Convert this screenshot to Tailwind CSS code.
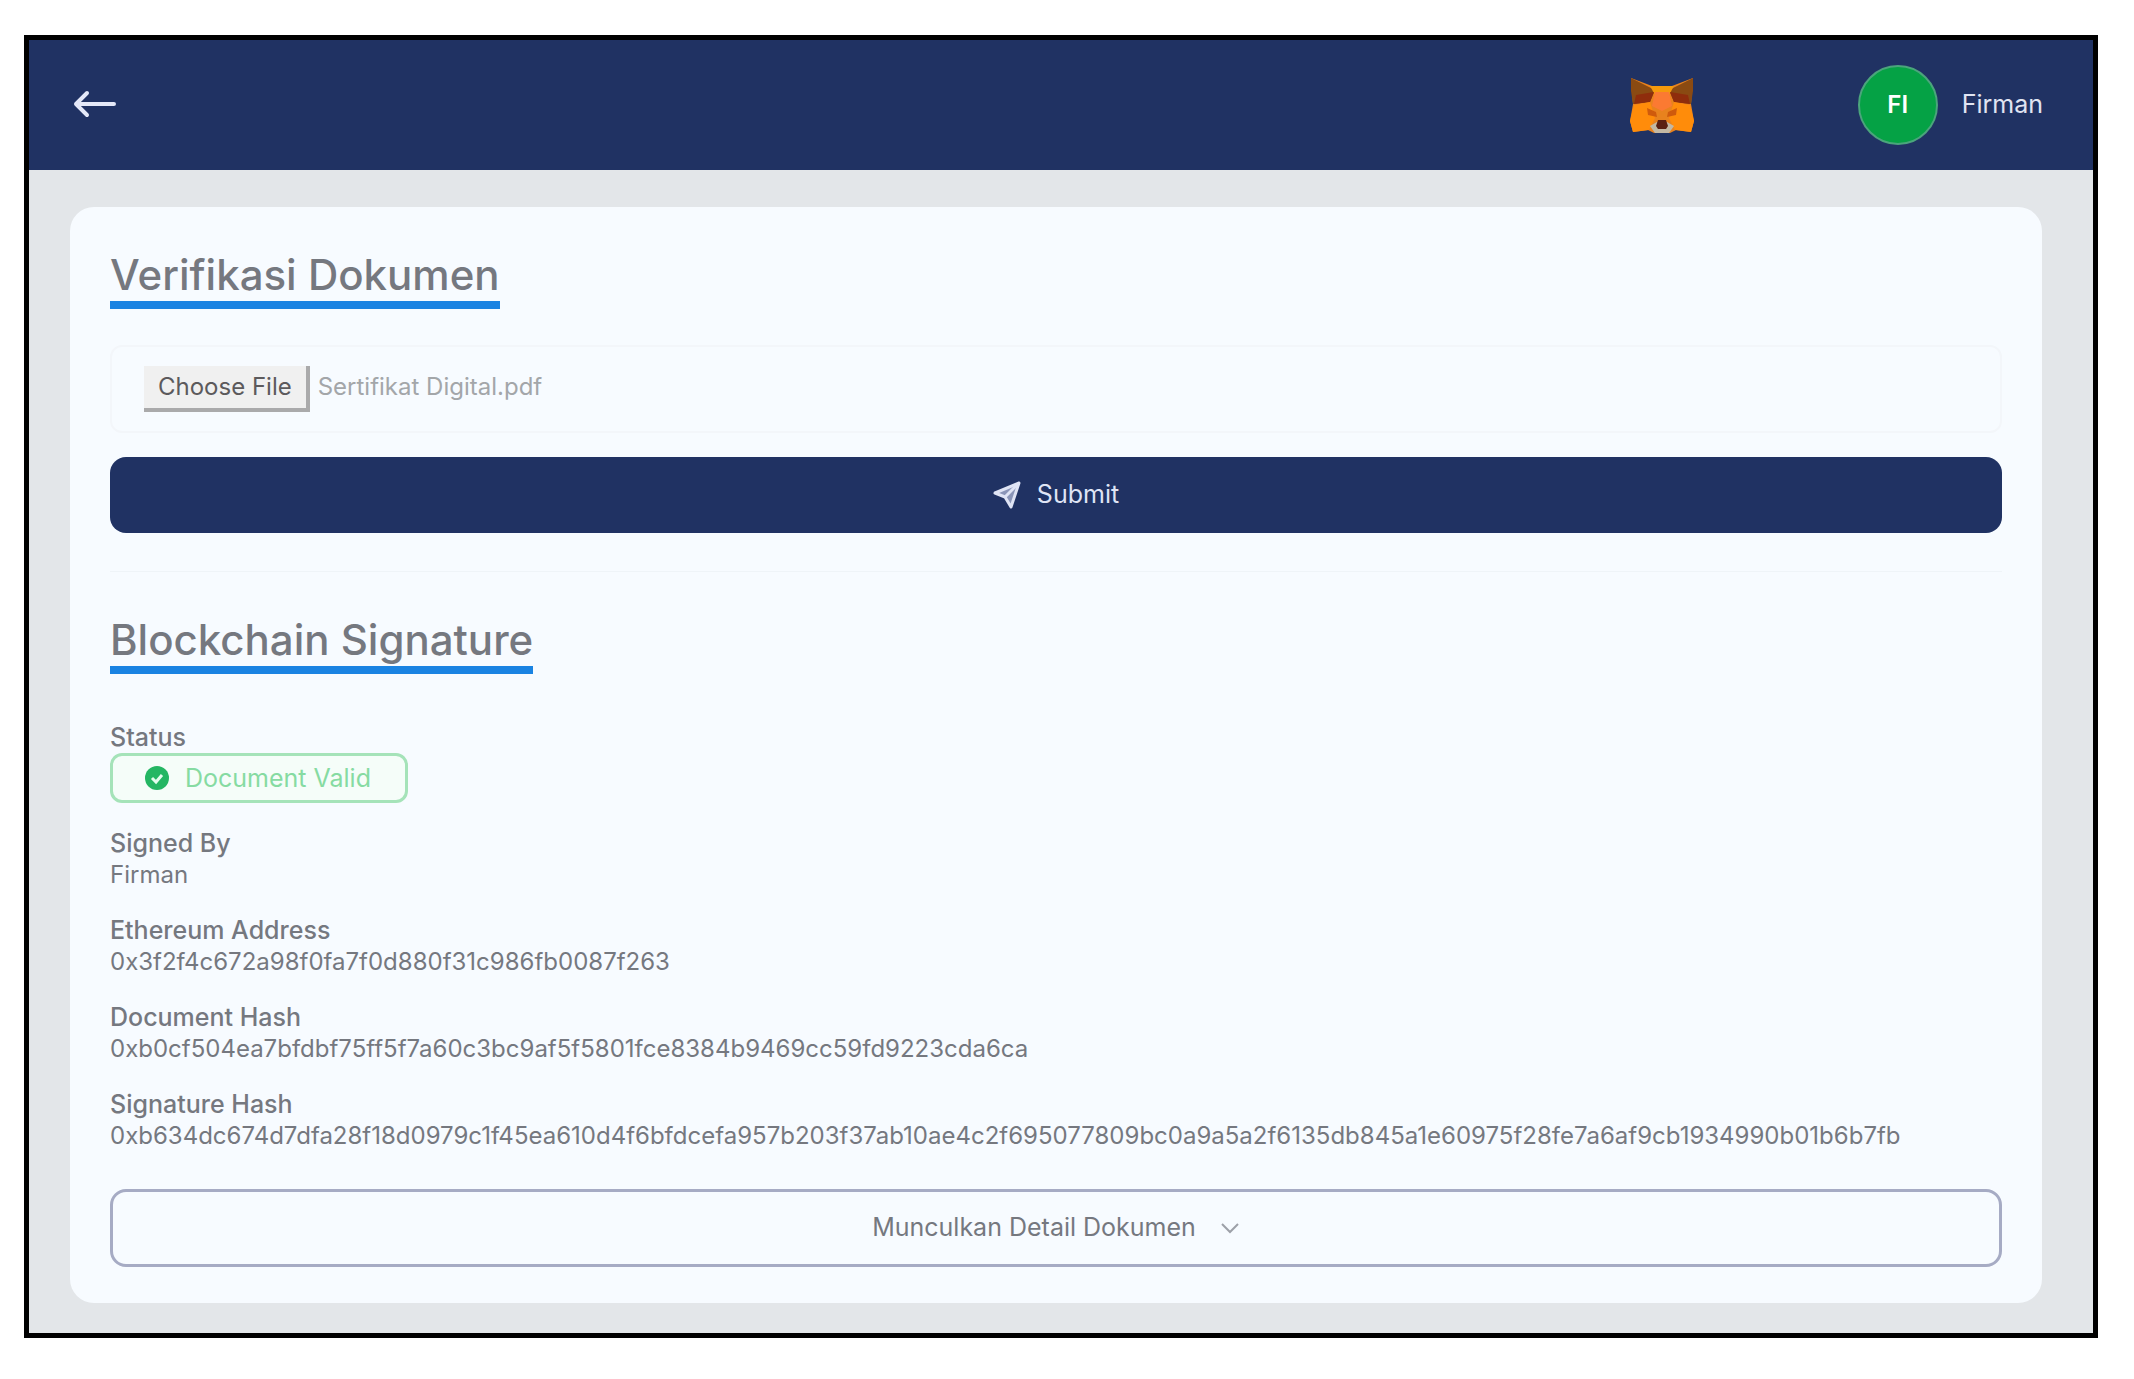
<!DOCTYPE html>
<html lang="id">
  <head>
    <meta charset="UTF-8" />
    <meta name="viewport" content="width=device-width, initial-scale=1.0" />
    <title>Verifikasi Dokumen</title>
    <script src="https://cdn.jsdelivr.net/npm/@tailwindcss/browser@4"></script>
  </head>
  <body class="bg-white font-['Inter',sans-serif] text-[#75787f]">
    <div class="mt-[35px] mr-9 ml-6 border-[5px] border-black bg-[#e3e6e9]">
      <!-- Navbar -->
      <header
        class="flex h-[130px] items-center justify-between bg-[#203263] pr-[50px] pl-11 text-white"
      >
        <a href="#" aria-label="Kembali">
          <svg
            class="h-8 w-11"
            viewBox="0 0 44 32"
            fill="none"
            stroke="#e4e8f8"
            stroke-width="4"
            stroke-linecap="round"
            stroke-linejoin="round"
          >
            <path d="M41 15H3M14 4 3 15l11 11" />
          </svg>
        </a>
        <div class="flex items-center">
          <button type="button" aria-label="MetaMask" class="mr-[164px]">
            <svg class="h-14 w-16" viewBox="0 0 64 56">
              <path fill="#e8821e" d="M1 1 22 9h20L63 1l-2 26 3 17-3 11-15-2-6 3H24l-6-3-15 2-3-11 3-17z" />
              <path fill="#8a4a12" d="M1 1 25 13l-5 12-17 2L1 14zM63 1 39 13l5 12 17 2 2-13z" />
              <path fill="#f59a0c" d="M20 9h24l-5 9H25z" />
              <path fill="#8f2d0c" d="M6 18l18-3-4 10-16 2zM58 18l-18-3 4 10 16 2z" />
              <path fill="#fb7a32" d="M25 15h14l3 14-10 5-10-5z" />
              <path fill="#ff8c0a" d="M4 28l16-3 5 16-6 12-16 2-3-11zM60 28l-16-3-5 16 6 12 16 2 3-11z" />
              <path fill="#cf5a0c" d="M17 31l9 4 1 5-9-2zM47 31l-9 4-1 5 9-2z" />
              <path fill="#c3b8a4" d="M20 49l7-4h10l7 4-5 7H25z" />
              <path fill="#5a1f12" d="M28 43h8l2 6-2 3h-8l-2-3z" />
            </svg>
          </button>
          <div
            class="mr-6 flex size-20 items-center justify-center rounded-full border-2 border-[#4ba57c] bg-[#05a245] text-2xl font-semibold"
          >
            FI
          </div>
          <span class="text-[25px] text-[#e0e4f2]">Firman</span>
        </div>
      </header>

      <main
        class="mt-[37px] mr-[51px] mb-[30px] ml-[41px] rounded-3xl bg-[#f7fbff] px-10 pt-[42px] pb-9"
      >
        <!-- Form verifikasi -->
        <h1
          class="w-fit border-b-8 border-[#1a83e2] text-[42px] leading-[52px] font-medium"
        >
          Verifikasi Dokumen
        </h1>
        <form>
          <div
            class="mt-9 rounded-xl border-2 border-[#f3f6fa] px-8 py-[18px]"
          >
            <input
              id="dokumen"
              type="file"
              aria-label="Dokumen"
              class="block h-12 w-full text-2xl leading-[44px] text-[#a3a6a9] file:mr-2 file:h-[46px] file:border-r-4 file:border-b-4 file:border-[#aaaaab] file:bg-[#f0f0f0] file:px-3.5 file:text-2xl file:text-[#5c5a5c]"
            />
          </div>
          <button
            type="submit"
            class="mt-6 flex h-[76px] w-full items-center justify-center gap-4 rounded-2xl bg-[#203263] text-[25px] text-[#dfe4f5]"
          >
            <svg
              class="size-7"
              viewBox="0 0 28 28"
              fill="none"
              stroke="currentColor"
              stroke-width="3"
              stroke-linejoin="round"
            >
              <path fill="#8a95b8" d="M26 2 18 26l-6-10L2 12z" />
              <path d="M26 2 12 16" />
            </svg>
            Submit
          </button>
        </form>

        <hr class="mt-[38px] mb-[42px] border-[#eff4f8]" />

        <!-- Hasil verifikasi -->
        <h2
          class="w-fit border-b-8 border-[#1a83e2] text-[42px] leading-[52px] font-medium"
        >
          Blockchain Signature
        </h2>
        <dl class="mt-12 space-y-[25px] text-2xl leading-[31px]">
          <div>
            <dt class="text-[25px] leading-[31px] font-medium">Status</dt>
            <dd
              class="flex h-[50px] w-[298px] items-center gap-4 rounded-xl border-3 border-[#a5e3b9] bg-[#f5fdf9] pl-8 text-[25px] text-[#86dba2]"
            >
              <svg class="size-6" viewBox="0 0 24 24" fill="none">
                <circle cx="12" cy="12" r="12" fill="#24b663" />
                <path stroke="#e4fcee" stroke-width="3" d="m7 12 4 4 6-7" />
              </svg>
              Document Valid
            </dd>
          </div>
          <div>
            <dt class="text-[25px] leading-[31px] font-medium">Signed By</dt>
            <dd>Firman</dd>
          </div>
          <div>
            <dt class="text-[25px] leading-[31px] font-medium">Ethereum Address</dt>
            <dd>0x3f2f4c672a98f0fa7f0d880f31c986fb0087f263</dd>
          </div>
          <div>
            <dt class="text-[25px] leading-[31px] font-medium">Document Hash</dt>
            <dd>
              0xb0cf504ea7bfdbf75ff5f7a60c3bc9af5f5801fce8384b9469cc59fd9223cda6ca
            </dd>
          </div>
          <div>
            <dt class="text-[25px] leading-[31px] font-medium">Signature Hash</dt>
            <dd>
              0xb634dc674d7dfa28f18d0979c1f45ea610d4f6bfdcefa957b203f37ab10ae4c2f695077809bc0a9a5a2f6135db845a1e60975f28fe7a6af9cb1934990b01b6b7fb
            </dd>
          </div>
        </dl>
        <button
          type="button"
          class="mt-[38px] flex h-[78px] w-full items-center justify-center gap-6 rounded-2xl border-3 border-[#a6abc4] text-[25px]"
        >
          Munculkan Detail Dokumen
          <svg
            class="h-3 w-5"
            viewBox="0 0 20 12"
            fill="none"
            stroke="#9da0a8"
            stroke-width="2"
          >
            <path d="m2 2 8 8 8-8" />
          </svg>
        </button>
      </main>
    </div>

    <script>
      const data = new DataTransfer();
      data.items.add(new File([""], "Sertifikat Digital.pdf"));
      document.getElementById("dokumen").files = data.files;
    </script>
  </body>
</html>
